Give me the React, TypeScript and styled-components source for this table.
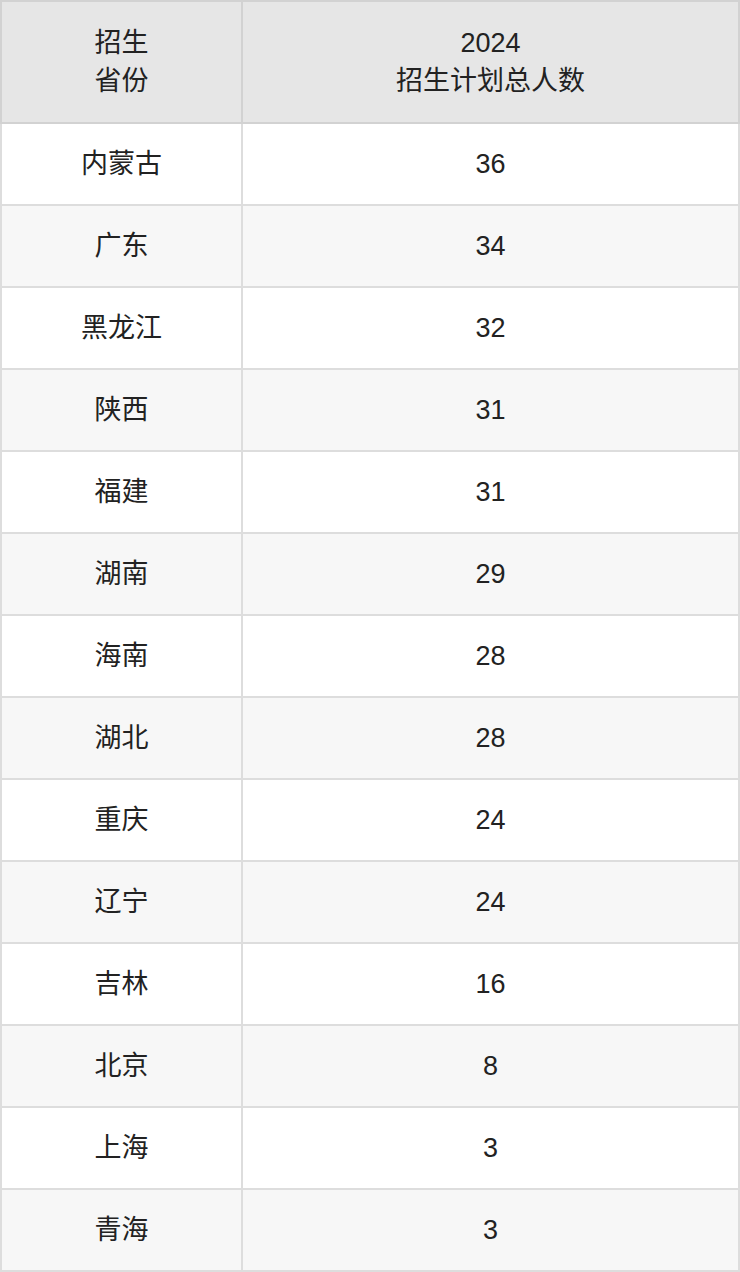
import React from 'react';
import styled, { createGlobalStyle } from 'styled-components';

const GlobalStyle = createGlobalStyle`
  html, body {
    margin: 0;
    padding: 0;
    background: #ffffff;
  }
  body {
    font-family: 'Liberation Sans', 'Noto Sans CJK SC', sans-serif;
    color: #222222;
  }
`;

const Table = styled.table`
  width: 740px;
  border-collapse: collapse;
  table-layout: fixed;
  font-size: 27px;
  text-align: center;
`;

const HeadCell = styled.th<{ $w?: number }>`
  width: ${({ $w }) => ($w ? `${$w}px` : 'auto')};
  height: 120px;
  padding: 0;
  font-weight: normal;
  line-height: 38px;
  background: #e6e6e6;
  border: 2px solid #d2d2d2;
  color: #222222;
`;

const Row = styled.tr<{ $alt: boolean }>`
  background: ${({ $alt }) => ($alt ? '#f7f7f7' : '#ffffff')};
`;

const Cell = styled.td`
  height: 80px;
  padding: 0;
  border: 2px solid #dddddd;
  line-height: 38px;
`;

const rows: [string, number][] = [
  ['内蒙古', 36],
  ['广东', 34],
  ['黑龙江', 32],
  ['陕西', 31],
  ['福建', 31],
  ['湖南', 29],
  ['海南', 28],
  ['湖北', 28],
  ['重庆', 24],
  ['辽宁', 24],
  ['吉林', 16],
  ['北京', 8],
  ['上海', 3],
  ['青海', 3],
];

export default function App(): JSX.Element {
  return (
    <>
      <GlobalStyle />
      <Table>
        <thead>
          <tr>
            <HeadCell $w={239}>
              招生
              <br />
              省份
            </HeadCell>
            <HeadCell>
              2024
              <br />
              招生计划总人数
            </HeadCell>
          </tr>
        </thead>
        <tbody>
          {rows.map(([province, count], i) => (
            <Row key={province} $alt={i % 2 === 1}>
              <Cell>{province}</Cell>
              <Cell>{count}</Cell>
            </Row>
          ))}
        </tbody>
      </Table>
    </>
  );
}
